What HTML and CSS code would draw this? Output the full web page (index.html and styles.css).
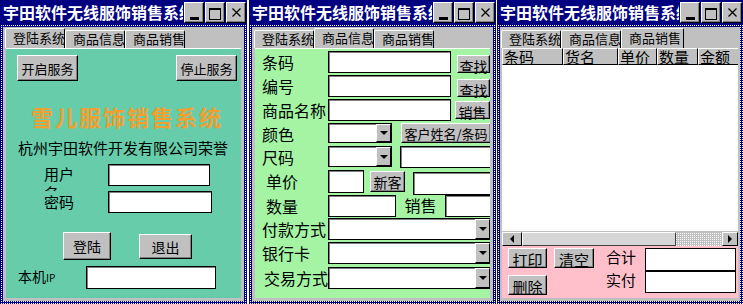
FILE: index.html
```html
<!DOCTYPE html>
<html lang="zh-CN">
<head>
    <meta charset="UTF-8">
    <meta name="viewport" content="width=device-width, initial-scale=1.0">
    <title>宇田软件无线服饰销售系统</title>
    <link rel="stylesheet" href="styles.css">
</head>
<body>
<div class="desk">

    <!-- 登陆系统 -->
    <div class="win w1">
        <div class="titlebar">
            <span class="title">宇田软件无线服饰销售系统</span>
            <span class="cap"><i class="ico-min"></i></span>
            <span class="cap"><i class="ico-max"></i></span>
            <span class="cap"><svg width="9" height="9" viewBox="0 0 9 9"><path d="M0.5 0.5L8.5 8.5M8.5 0.5L0.5 8.5" stroke="#000" stroke-width="1.2"/></svg></span>
        </div>
        <div class="frame">
            <div class="inner">
                <div class="tabs">
                    <div class="tab on">登陆系统</div>
                    <div class="tab">商品信息</div>
                    <div class="tab">商品销售</div>
                </div>
                <div class="panel login">
                    <div class="srv-row">
                        <button class="btn srv">开启服务</button>
                        <button class="btn srv">停止服务</button>
                    </div>
                    <div class="brand">雪儿服饰销售系统</div>
                    <div class="honor">杭州宇田软件开发有限公司荣誉</div>
                    <div class="lrow user">
                        <span class="llbl wrap">用户名</span>
                        <input class="edit e-user" type="text">
                    </div>
                    <div class="lrow pass">
                        <span class="llbl">密码</span>
                        <input class="edit e-pass" type="text">
                    </div>
                    <div class="lrow act">
                        <button class="btn b-login">登陆</button>
                        <button class="btn b-exit">退出</button>
                    </div>
                    <div class="lrow ip">
                        <span class="ip-lbl">本机<small>IP</small></span>
                        <input class="edit e-ip" type="text">
                    </div>
                </div>
            </div>
        </div>
    </div>

    <!-- 商品信息 -->
    <div class="win w2">
        <div class="titlebar">
            <span class="title">宇田软件无线服饰销售系统</span>
            <span class="cap"><i class="ico-min"></i></span>
            <span class="cap"><i class="ico-max"></i></span>
            <span class="cap"><svg width="9" height="9" viewBox="0 0 9 9"><path d="M0.5 0.5L8.5 8.5M8.5 0.5L0.5 8.5" stroke="#000" stroke-width="1.2"/></svg></span>
        </div>
        <div class="frame">
            <div class="inner">
                <div class="tabs">
                    <div class="tab">登陆系统</div>
                    <div class="tab on">商品信息</div>
                    <div class="tab">商品销售</div>
                </div>
                <div class="panel goods">
                    <div class="grow r1">
                        <span class="glbl">条码</span>
                        <input class="edit g-main" type="text">
                        <button class="btn g-find">查找</button>
                    </div>
                    <div class="grow r2">
                        <span class="glbl">编号</span>
                        <input class="edit g-main" type="text">
                        <button class="btn g-find">查找</button>
                    </div>
                    <div class="grow r3">
                        <span class="glbl">商品名称</span>
                        <input class="edit g-main" type="text">
                        <button class="btn g-sell">销售</button>
                    </div>
                    <div class="grow r4">
                        <span class="glbl">颜色</span>
                        <span class="combo c-short"><i class="drop"></i></span>
                        <button class="btn g-cust">客户姓名/条码</button>
                    </div>
                    <div class="grow r5">
                        <span class="glbl">尺码</span>
                        <span class="combo c-short c-tall"><i class="drop"></i></span>
                        <input class="edit g-cname" type="text">
                    </div>
                    <div class="grow r6">
                        <span class="glbl ind">单价</span>
                        <input class="edit g-price" type="text">
                        <button class="btn g-new">新客</button>
                        <input class="edit g-newc" type="text">
                    </div>
                    <div class="grow r7">
                        <span class="glbl ind">数量</span>
                        <input class="edit g-qty" type="text">
                        <span class="g-sl">销售</span>
                        <input class="edit g-slv" type="text">
                    </div>
                    <div class="grow r8">
                        <span class="glbl">付款方式</span>
                        <span class="combo c-long"><i class="drop"></i></span>
                    </div>
                    <div class="grow r9">
                        <span class="glbl">银行卡</span>
                        <span class="combo c-long"><i class="drop"></i></span>
                    </div>
                    <div class="grow r10">
                        <span class="glbl ind2">交易方式</span>
                        <span class="combo c-long"><i class="drop"></i></span>
                    </div>
                </div>
            </div>
        </div>
    </div>

    <!-- 商品销售 -->
    <div class="win w3">
        <div class="titlebar">
            <span class="title">宇田软件无线服饰销售系统</span>
            <span class="cap"><i class="ico-min"></i></span>
            <span class="cap"><i class="ico-max"></i></span>
            <span class="cap"><svg width="9" height="9" viewBox="0 0 9 9"><path d="M0.5 0.5L8.5 8.5M8.5 0.5L0.5 8.5" stroke="#000" stroke-width="1.2"/></svg></span>
        </div>
        <div class="frame">
            <div class="inner">
                <div class="tabs">
                    <div class="tab">登陆系统</div>
                    <div class="tab">商品信息</div>
                    <div class="tab on wide">商品销售</div>
                </div>
                <div class="panel sales">
                    <div class="list">
                        <div class="lhead">
                            <span class="h-code">条码</span>
                            <span class="h-name">货名</span>
                            <span class="h-price">单价</span>
                            <span class="h-qty">数量</span>
                            <span class="h-sum">金额</span>
                        </div>
                        <div class="lbody"></div>
                        <div class="hscroll">
                            <span class="sb-btn sb-left"><i class="tri-l"></i></span>
                            <span class="sb-thumb"></span>
                            <span class="sb-track"></span>
                            <span class="sb-btn sb-right"><i class="tri-r"></i></span>
                        </div>
                    </div>
                    <div class="paybar">
                        <div class="pay-btns">
                            <button class="btn pb">打印</button>
                            <button class="btn pb">清空</button>
                            <button class="btn pb">删除</button>
                        </div>
                        <div class="pay-sum">
                            <span>合计</span>
                            <input class="edit" type="text">
                            <span>实付</span>
                            <input class="edit" type="text">
                        </div>
                    </div>
                </div>
            </div>
        </div>
    </div>

</div>
</body>
</html>
```

FILE: styles.css
```css
* {
    box-sizing: border-box;
}

body {
    margin: 0;
    background: #fff;
    font-family: "Noto Sans CJK SC", "Liberation Sans", sans-serif;
    color: #000;
}

.desk {
    display: flex;
    width: 743px;
    height: 304px;
    overflow: hidden;
}

/* window chrome */
.win {
    flex: none;
    width: 247px;
    height: 304px;
    display: flex;
    flex-direction: column;
}

.w1 { margin-right: 2px; }
.w2 { margin-right: 1px; }
.w3 { width: 246px; }

.titlebar {
    flex: none;
    height: 24px;
    background: #000080;
    display: flex;
    align-items: flex-start;
    padding: 2px 1px 0 0;
}

.title {
    flex: 1;
    min-width: 0;
    overflow: hidden;
    white-space: nowrap;
    color: #fff;
    font-weight: bold;
    font-size: 16px;
    line-height: 20px;
    padding-left: 3px;
}

.cap {
    flex: none;
    width: 20px;
    height: 21px;
    margin-left: 1px;
    background: #c0c0c0;
    border: 1px solid;
    border-color: #fff #000 #000 #fff;
    box-shadow: inset -1px -1px #808080;
    display: flex;
    align-items: center;
    justify-content: center;
}

.ico-min {
    width: 9px;
    height: 3px;
    background: #000;
    margin-top: 12px;
}

.ico-max {
    width: 12px;
    height: 12px;
    border: 1px solid #000;
    border-top-width: 2px;
    margin-top: 2px;
}

/* dotted navy sizing frame */
.frame {
    flex: 1;
    padding: 3px;
    background:
        linear-gradient(#000080 1px, transparent 1px) 0 0 / 2px 2px,
        linear-gradient(90deg, #000080 1px, #fff 1px) 0 0 / 2px 2px;
}

.inner {
    height: 100%;
    background: #c0c0c0;
    padding: 0 3px 3px;
    display: flex;
    flex-direction: column;
}

.w3 .inner {
    padding: 0 2px 3px;
}

/* tab strip */
.tabs {
    flex: none;
    height: 21px;
    display: flex;
    align-items: flex-end;
    margin-left: -1px;
}

.tab {
    flex: none;
    width: 60px;
    height: 18px;
    padding-left: 7px;
    font-size: 13px;
    line-height: 16px;
    white-space: nowrap;
    overflow: hidden;
    background: #c0c0c0;
    border: 1px solid;
    border-bottom: 0;
    border-color: #fff #000 #000 #fff;
    border-radius: 2px 2px 0 0;
}

.tab.on {
    height: 20px;
    line-height: 18px;
}

.tab.wide {
    width: 63px;
}

.panel {
    flex: 1;
    border-top: 1px solid #fff;
}

/* shared controls */
.btn {
    flex: none;
    font-family: inherit;
    font-size: 13px;
    padding: 0;
    color: #000;
    background: #c0c0c0;
    border: 1px solid;
    border-color: #fff #000 #000 #fff;
    box-shadow: inset -1px -1px #808080;
    white-space: nowrap;
}

.edit {
    flex: none;
    display: block;
    margin: 0;
    padding: 0;
    background: #fff;
    border: 1px solid #000;
    box-shadow: inset 1px 1px #808080;
    font: inherit;
}

/* 登陆系统 */
.login {
    background: #66ccaa;
    padding: 6px 4px 0 11px;
}

.srv-row {
    display: flex;
    justify-content: space-between;
}

.srv {
    width: 61px;
    height: 26px;
}

.brand {
    margin-top: 22px;
    text-align: center;
    font-size: 22px;
    line-height: 26px;
    font-weight: bold;
    letter-spacing: 2px;
    color: #f0a030;
}

.honor {
    margin-top: 10px;
    margin-left: 1px;
    font-size: 15px;
    line-height: 18px;
    white-space: nowrap;
}

.lrow {
    display: flex;
    align-items: flex-start;
}

.user {
    margin-top: 7px;
}

.llbl {
    flex: none;
    width: 32px;
    margin: 0 32px 0 27px;
    font-size: 15px;
    line-height: 22px;
}

.llbl.wrap {
    height: 27px;
    line-height: 19px;
    overflow: hidden;
}

.e-user { width: 102px; height: 22px; }
.e-pass { width: 104px; height: 22px; }

.act {
    margin-top: 19px;
}

.b-login {
    width: 48px;
    height: 28px;
    margin-left: 46px;
    font-size: 14px;
}

.b-exit {
    width: 53px;
    height: 25px;
    margin: 2px 0 0 28px;
    font-size: 14px;
}

.ip {
    margin-top: 6px;
}

.ip-lbl {
    flex: none;
    width: 69px;
    padding-left: 1px;
    font-size: 14px;
    line-height: 20px;
}

.ip-lbl small {
    font-size: 10px;
}

.e-ip { width: 130px; height: 23px; }

/* 商品信息 */
.goods {
    background: #a4f4a4;
    padding-top: 2px;
    display: flex;
    flex-direction: column;
    overflow: hidden;
}

.grow {
    flex: none;
    display: flex;
    align-items: flex-start;
    height: 24px;
}

.r4 { height: 23px; }
.r6 { height: 25px; }
.r7 { height: 23px; }
.r9 { height: 25px; }

.glbl {
    flex: none;
    width: 73px;
    padding-left: 7px;
    font-size: 16px;
    line-height: 22px;
    white-space: nowrap;
}

.glbl.ind { padding-left: 11px; }
.glbl.ind2 { padding-left: 9px; }

.g-main { width: 123px; height: 22px; }

.g-find {
    width: 33px;
    height: 18px;
    margin: 4px 0 0 6px;
    font-size: 14px;
}

.g-sell {
    width: 35px;
    height: 18px;
    margin: 2px 0 0 4px;
    font-size: 14px;
}

.combo {
    flex: none;
    display: flex;
    justify-content: flex-end;
    background: #fff;
    border: 1px solid #000;
    box-shadow: inset 1px 1px #808080;
}

.c-short { width: 64px; height: 20px; }
.c-short.c-tall { height: 21px; }
.c-long { width: 163px; height: 22px; }

.drop {
    width: 15px;
    height: 100%;
    background: #c0c0c0;
    border: 1px solid;
    border-color: #fff #000 #000 #fff;
    display: flex;
    align-items: center;
    justify-content: center;
}

.drop::after {
    content: "";
    border-left: 4px solid transparent;
    border-right: 4px solid transparent;
    border-top: 4px solid #000;
}

.g-cust {
    width: 90px;
    height: 20px;
    margin-left: 9px;
}

.g-cname {
    width: 93px;
    height: 22px;
    margin-left: 8px;
}

.g-price { width: 36px; height: 23px; }

.g-new {
    width: 35px;
    height: 21px;
    margin: 1px 0 0 6px;
    font-size: 14px;
}

.g-newc {
    width: 80px;
    height: 23px;
    margin: 2px 0 0 8px;
}

.g-qty { width: 68px; height: 22px; }

.g-sl {
    flex: none;
    width: 49px;
    text-align: center;
    font-size: 16px;
    line-height: 20px;
}

.g-slv { width: 48px; height: 22px; }

/* 商品销售 */
.sales {
    display: flex;
    flex-direction: column;
    border-top: 0;
}

.list {
    flex: 1;
    background: #fff;
    display: flex;
    flex-direction: column;
    overflow: hidden;
}

.lhead {
    flex: none;
    display: flex;
    height: 17px;
}

.lhead span {
    flex: none;
    background: #c0c0c0;
    border: 1px solid;
    border-color: #fff #000 #000 #fff;
    padding-left: 1px;
    font-size: 15px;
    line-height: 15px;
    white-space: nowrap;
    overflow: hidden;
}

.h-code { width: 61px; }
.h-name { width: 55px; }
.h-price { width: 39px; }
.h-qty { width: 41px; }
.h-sum { width: 41px; }

.lbody {
    flex: 1;
}

.hscroll {
    flex: none;
    display: flex;
    height: 15px;
    border-top: 1px solid #c0c0c0;
}

.sb-btn {
    flex: none;
    background: #c0c0c0;
    border: 1px solid;
    border-color: #fff #000 #000 #fff;
    display: flex;
    align-items: center;
    justify-content: center;
}

.sb-left { width: 20px; }
.sb-right { width: 16px; }

.tri-l {
    border-top: 4px solid transparent;
    border-bottom: 4px solid transparent;
    border-right: 4px solid #000;
}

.tri-r {
    border-top: 4px solid transparent;
    border-bottom: 4px solid transparent;
    border-left: 4px solid #000;
}

.sb-thumb {
    flex: none;
    width: 154px;
    background: #d6d6d6;
    border: 1px solid;
    border-color: #fff #404040 #404040 #fff;
}

.sb-track {
    flex: 1;
    background:
        linear-gradient(#c0c0c0 1px, transparent 1px) 0 0 / 2px 2px,
        linear-gradient(90deg, #fff 1px, #c0c0c0 1px) 0 0 / 2px 2px;
}

.paybar {
    flex: none;
    height: 52px;
    background: #ffc0cb;
    display: flex;
    align-items: flex-start;
    padding: 2px 0 0 6px;
}

.pay-btns {
    display: grid;
    grid-template-columns: 39px 40px;
    grid-template-rows: 20px 20px;
    gap: 7px;
}

.pb {
    font-size: 15px;
}

.pay-sum {
    margin-left: 12px;
    display: grid;
    grid-template-columns: 39px 91px;
    grid-template-rows: 23px 22px;
}

.pay-sum span {
    font-size: 15px;
    line-height: 17px;
}

.pay-sum .edit {
    width: 91px;
    height: 100%;
    box-shadow: none;
}
```
